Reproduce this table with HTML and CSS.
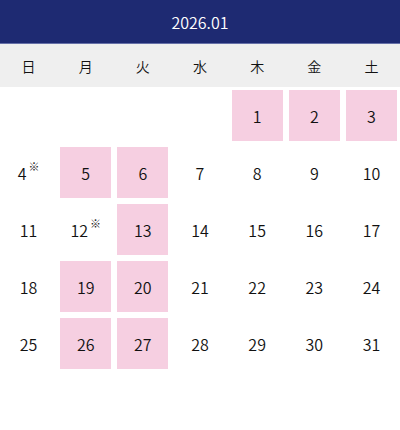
FILE: index.html
```html
<!DOCTYPE html>
<html lang="ja">
<head>
<meta charset="utf-8">
<link rel="stylesheet" href="styles.css">
</head>
<body>
<div class="cal">
  <div class="cal-title">2026.01</div>
  <div class="cal-week">
    <div>日</div><div>月</div><div>火</div><div>水</div><div>木</div><div>金</div><div>土</div>
  </div>
  <div class="cal-grid">
    <div class="day"></div><div class="day"></div><div class="day"></div><div class="day"></div>
    <div class="day on">1</div><div class="day on">2</div><div class="day on">3</div>
    <div class="day">4<sup>※</sup></div><div class="day on">5</div><div class="day on">6</div><div class="day">7</div><div class="day">8</div><div class="day">9</div><div class="day">10</div>
    <div class="day">11</div><div class="day">12<sup>※</sup></div><div class="day on">13</div><div class="day">14</div><div class="day">15</div><div class="day">16</div><div class="day">17</div>
    <div class="day">18</div><div class="day on">19</div><div class="day on">20</div><div class="day">21</div><div class="day">22</div><div class="day">23</div><div class="day">24</div>
    <div class="day">25</div><div class="day on">26</div><div class="day on">27</div><div class="day">28</div><div class="day">29</div><div class="day">30</div><div class="day">31</div>
  </div>
</div>
</body>
</html>
```
FILE: styles.css
```css
html, body { margin: 0; padding: 0; background: #fff; }
body { font-family: "Noto Sans CJK JP", "Noto Sans", sans-serif; color: #111; }
.cal { width: 400px; }
.cal-title {
  height: 43px;
  background: #1e2a72;
  border-bottom: 1px solid #6670a8;
  color: #fff;
  font-size: 16px;
  font-weight: 350;
  display: flex;
  align-items: center;
  justify-content: center;
}
.cal-week {
  height: 43px;
  background: #efefef;
  display: grid;
  grid-template-columns: repeat(7, 1fr);
  align-items: center;
  font-size: 14px;
  font-weight: 350;
  text-align: center;
  color: #111;
}
.cal-grid {
  display: grid;
  grid-template-columns: repeat(7, 1fr);
  grid-auto-rows: 57px;
}
.day {
  margin: 3px;
  display: flex;
  align-items: center;
  justify-content: center;
  font-size: 16px;
  font-weight: 350;
  color: #111;
}
.day.on { background: #f6cfe1; }
.day sup {
  font-size: 11px;
  position: relative;
  top: -6px;
  margin-left: 2px;
  line-height: 1;
  color: #222;
  font-weight: 400;
}
```
